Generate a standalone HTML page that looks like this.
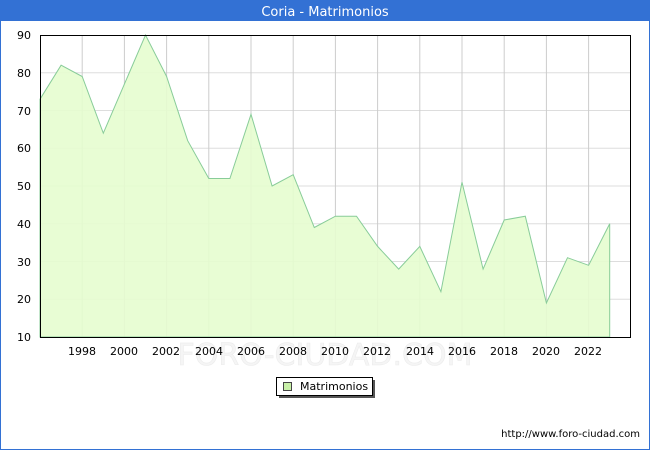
<!DOCTYPE html>
<html><head><style>body{margin:0;width:650px;height:450px;overflow:hidden;font-family:"DejaVu Sans","Liberation Sans",sans-serif}</style></head><body>
<svg width="650" height="450" xmlns="http://www.w3.org/2000/svg" font-family="DejaVu Sans, Liberation Sans, sans-serif">
<rect x="0" y="0" width="650" height="450" fill="#fff" stroke="#3371d4" stroke-width="2"/>
<rect x="0" y="0" width="650" height="21" fill="#3371d4"/>
<text x="325" y="16" fill="#fff" font-size="13" text-anchor="middle">Coria - Matrimonios</text>
<g stroke="#dddddd" stroke-width="1">
<line x1="40" x2="630" y1="72.75" y2="72.75"/><line x1="40" x2="630" y1="110.5" y2="110.5"/><line x1="40" x2="630" y1="148.25" y2="148.25"/><line x1="40" x2="630" y1="186" y2="186"/><line x1="40" x2="630" y1="223.75" y2="223.75"/><line x1="40" x2="630" y1="261.5" y2="261.5"/><line x1="40" x2="630" y1="299.25" y2="299.25"/>
</g>
<g stroke="#cccccc" stroke-width="1">
<line x1="82.2" x2="82.2" y1="35" y2="337"/><line x1="124.4" x2="124.4" y1="35" y2="337"/><line x1="166.6" x2="166.6" y1="35" y2="337"/><line x1="208.8" x2="208.8" y1="35" y2="337"/><line x1="251" x2="251" y1="35" y2="337"/><line x1="293.2" x2="293.2" y1="35" y2="337"/><line x1="335.4" x2="335.4" y1="35" y2="337"/><line x1="377.6" x2="377.6" y1="35" y2="337"/><line x1="419.8" x2="419.8" y1="35" y2="337"/><line x1="462" x2="462" y1="35" y2="337"/><line x1="504.2" x2="504.2" y1="35" y2="337"/><line x1="546.4" x2="546.4" y1="35" y2="337"/><line x1="588.6" x2="588.6" y1="35" y2="337"/>
</g>
<text x="325" y="365" font-size="30" fill="#f5f5f5" stroke="#ececec" stroke-width="0.6" text-anchor="middle">FORO-CIUDAD.COM</text>
<polygon fill="#e5fdcf" fill-opacity="0.9" stroke="#88cc99" stroke-width="1" points="40,337 40,99.2 61.1,65.2 82.2,76.5 103.3,133.2 124.4,84.1 145.5,35 166.6,76.5 187.7,140.7 208.8,178.5 229.9,178.5 251,114.3 272.1,186 293.2,174.7 314.3,227.5 335.4,216.2 356.5,216.2 377.6,246.4 398.7,269.1 419.8,246.4 440.9,291.7 462,182.2 483.1,269.1 504.2,220 525.3,216.2 546.4,303 567.5,257.7 588.6,265.3 609.7,223.75 609.7,337"/>
<rect x="40.5" y="35.5" width="590" height="302" fill="none" stroke="#000" stroke-width="1"/>
<g font-size="11" fill="#000" text-anchor="end">
<text x="31" y="39">90</text><text x="31" y="77">80</text><text x="31" y="115">70</text><text x="31" y="152">60</text><text x="31" y="190">50</text><text x="31" y="228">40</text><text x="31" y="266">30</text><text x="31" y="303">20</text><text x="31" y="341">10</text>
</g>
<g font-size="11" fill="#000" text-anchor="middle">
<text x="82" y="355">1998</text><text x="124" y="355">2000</text><text x="166" y="355">2002</text><text x="209" y="355">2004</text><text x="251" y="355">2006</text><text x="293" y="355">2008</text><text x="335" y="355">2010</text><text x="377" y="355">2012</text><text x="420" y="355">2014</text><text x="462" y="355">2016</text><text x="504" y="355">2018</text><text x="546" y="355">2020</text><text x="588" y="355">2022</text>
</g>
<rect x="279" y="380" width="96" height="18" fill="#555"/>
<rect x="276.5" y="377.5" width="96" height="18" fill="#fff" stroke="#000"/>
<rect x="283.5" y="382.5" width="8" height="8" fill="#c8f0a8" stroke="#444"/>
<text x="300" y="390" font-size="11">Matrimonios</text>
<text x="640" y="437" font-size="10" text-anchor="end">http://www.foro-ciudad.com</text>
</svg>
</body></html>
